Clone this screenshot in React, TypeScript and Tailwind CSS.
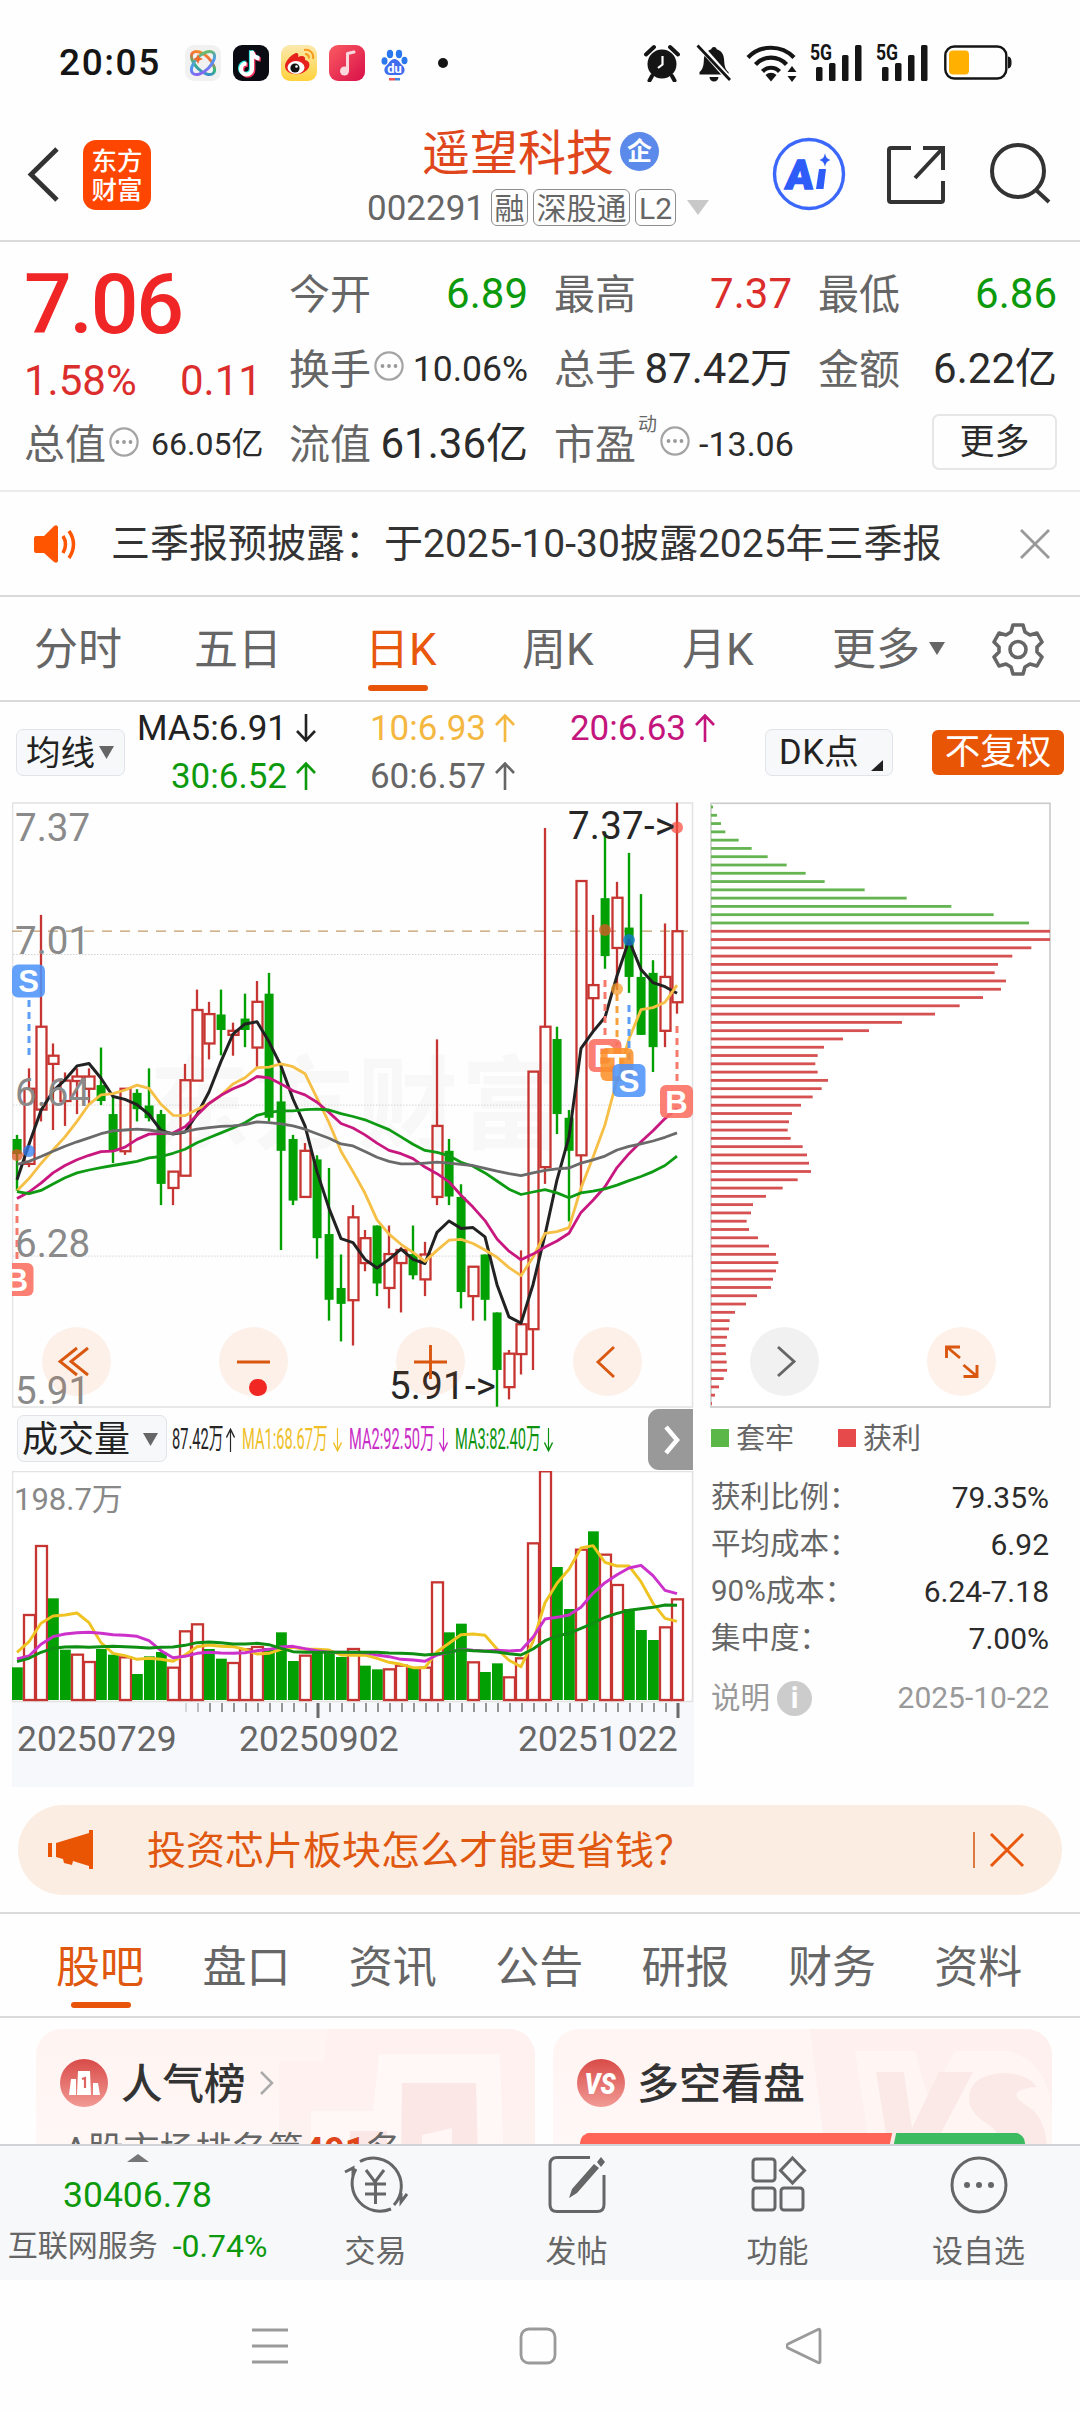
import React from "react";

/* ---------- candlestick data: direction, high, body top, body bottom, low ---------- */
type Candle = [string, number, number, number, number];
const CANDLES: Candle[] = [
  ["g", 845, 855, 892, 982], ["r", 682, 732, 916, 924], ["r", 306, 580, 783, 812], ["r", 621, 651, 671, 833],
  ["r", 692, 712, 762, 823], ["r", 682, 702, 713, 794], ["r", 682, 702, 732, 772], ["g", 631, 723, 762, 772],
  ["g", 750, 794, 885, 914], ["r", 730, 732, 885, 894], ["g", 733, 742, 782, 812], ["g", 682, 773, 804, 812],
  ["g", 784, 794, 965, 1017], ["r", 935, 935, 975, 1017], ["r", 671, 711, 945, 945], ["r", 489, 539, 712, 712],
  ["r", 519, 549, 621, 660], ["g", 489, 550, 588, 650], ["r", 570, 590, 600, 651], ["g", 499, 560, 588, 630],
  ["r", 468, 519, 631, 680], ["g", 448, 499, 803, 812], ["g", 671, 763, 884, 1127], ["g", 845, 855, 1006, 1017],
  ["r", 865, 884, 997, 997], ["g", 895, 905, 1098, 1148], ["g", 926, 1088, 1249, 1300], ["g", 1138, 1220, 1259, 1351],
  ["r", 1017, 1047, 1250, 1361], ["r", 1078, 1098, 1159, 1179], ["g", 1067, 1067, 1209, 1240], ["r", 1067, 1137, 1220, 1270],
  ["r", 1120, 1127, 1159, 1280], ["g", 1067, 1137, 1189, 1199], ["r", 1107, 1138, 1199, 1240], ["r", 611, 823, 997, 1017],
  ["g", 855, 884, 996, 1017], ["g", 966, 997, 1230, 1270], ["r", 1168, 1168, 1240, 1300], ["g", 1138, 1138, 1249, 1300],
  ["g", 1280, 1280, 1421, 1511], ["r", 1372, 1381, 1463, 1493], ["r", 1128, 1309, 1382, 1432], ["r", 690, 690, 1321, 1421],
  ["r", 93, 580, 924, 965], ["g", 580, 610, 794, 843], ["g", 784, 803, 884, 1057], ["r", 223, 223, 895, 985],
  ["r", 306, 478, 510, 590], ["g", 103, 265, 407, 438], ["r", 225, 264, 387, 490], ["g", 154, 337, 458, 497],
  ["g", 255, 458, 600, 600], ["g", 417, 448, 630, 691], ["r", 327, 458, 590, 630], ["r", 31, 346, 520, 548],
];
const MA5 = [955, 868, 785, 738, 710, 676, 670, 706, 751, 758, 771, 795, 834, 843, 838, 795, 740, 665, 598, 573, 568, 617, 676, 757, 823, 935, 1025, 1099, 1109, 1150, 1171, 1150, 1125, 1150, 1160, 1084, 1056, 1074, 1072, 1095, 1212, 1291, 1306, 1212, 1090, 955, 850, 633, 592, 557, 455, 368, 440, 472, 482, 498];
const MA10 = [982, 952, 915, 882, 850, 812, 770, 747, 744, 735, 723, 731, 770, 797, 798, 783, 768, 748, 720, 705, 680, 679, 671, 678, 695, 755, 815, 885, 935, 988, 1053, 1088, 1113, 1133, 1155, 1128, 1103, 1101, 1111, 1127, 1145, 1170, 1190, 1145, 1086, 1082, 1072, 975, 900, 820, 710, 610, 538, 533, 520, 478];
const MA20 = [1001, 985, 963, 938, 920, 906, 895, 886, 885, 875, 856, 843, 842, 840, 825, 797, 768, 748, 732, 720, 702, 705, 720, 737, 747, 765, 790, 817, 828, 845, 865, 883, 891, 903, 924, 940, 960, 993, 1022, 1055, 1100, 1130, 1151, 1137, 1120, 1105, 1086, 1035, 1005, 972, 925, 891, 862, 835, 805, 780];
const MA30 = [984, 989, 981, 965, 950, 938, 931, 925, 920, 915, 910, 901, 898, 890, 880, 864, 852, 840, 828, 815, 797, 790, 786, 786, 783, 782, 784, 793, 800, 808, 820, 832, 850, 868, 883, 888, 896, 912, 922, 938, 958, 978, 991, 985, 979, 987, 999, 987, 983, 977, 968, 957, 947, 935, 920, 897];
const MA60 = [917, 910, 898, 885, 873, 862, 852, 842, 835, 833, 831, 833, 838, 842, 837, 831, 827, 824, 823, 820, 813, 815, 818, 823, 831, 842, 853, 867, 872, 886, 900, 910, 916, 916, 914, 912, 914, 917, 920, 927, 934, 940, 945, 938, 932, 928, 926, 914, 906, 897, 882, 873, 867, 860, 851, 840];

/* ---------- volume data ---------- */
const VOLUMES: [string, number][] = [
  ["g", 803], ["r", 645], ["r", 438], ["g", 596], ["g", 750], ["r", 764], ["r", 786], ["g", 748], ["g", 765], ["r", 772],
  ["g", 823], ["g", 770], ["g", 757], ["r", 803], ["r", 694], ["r", 673], ["g", 748], ["g", 777], ["r", 789], ["r", 748],
  ["r", 741], ["g", 745], ["g", 698], ["g", 784], ["r", 767], ["g", 750], ["g", 757], ["g", 772], ["r", 747], ["g", 798],
  ["g", 809], ["r", 808], ["r", 797], ["g", 802], ["r", 803], ["r", 547], ["g", 698], ["g", 672], ["r", 787], ["g", 817],
  ["g", 791], ["r", 832], ["r", 775], ["r", 430], ["r", 214], ["g", 502], ["g", 628], ["r", 449], ["g", 395], ["r", 464],
  ["r", 555], ["g", 628], ["g", 691], ["g", 721], ["r", 682], ["r", 598],
];
const VMA1 = [757, 725, 670, 648, 645, 639, 668, 728, 760, 767, 778, 775, 778, 784, 765, 740, 735, 739, 740, 748, 762, 760, 748, 742, 748, 748, 750, 765, 766, 765, 775, 787, 793, 803, 803, 755, 730, 704, 702, 706, 747, 781, 800, 725, 608, 550, 508, 444, 437, 487, 498, 498, 545, 610, 655, 664];
const VMA2 = [777, 768, 733, 710, 702, 698, 697, 700, 704, 706, 709, 722, 752, 773, 769, 760, 757, 759, 760, 758, 752, 748, 741, 739, 746, 752, 757, 757, 757, 758, 765, 770, 778, 780, 784, 765, 757, 748, 751, 753, 751, 753, 751, 712, 657, 652, 645, 622, 580, 548, 524, 504, 496, 527, 571, 581];
const VMA3 = [785, 775, 757, 745, 741, 740, 742, 740, 739, 740, 742, 744, 742, 741, 736, 728, 726, 728, 732, 732, 730, 734, 745, 755, 757, 757, 757, 757, 757, 757, 757, 759, 760, 761, 765, 762, 757, 749, 752, 754, 756, 761, 765, 747, 722, 708, 700, 685, 670, 652, 640, 631, 626, 622, 615, 616];

/* ---------- chip distribution: bar lengths ---------- */
const CHIPS = [6, 18, 30, 43, 83, 122, 170, 227, 284, 341, 461, 587, 721, 848, 954, 1017, 1017, 961, 904, 861, 851, 885, 870, 816, 746, 672, 573, 474, 396, 339, 320, 313, 320, 351, 332, 305, 270, 243, 234, 230, 239, 275, 288, 294, 300, 260, 215, 165, 126, 120, 107, 114, 141, 174, 195, 202, 195, 186, 180, 138, 105, 72, 56, 54, 48, 44, 45, 47, 48, 38, 24, 12, 3];

const cx = (i: number) => 17 + i * 12;
const py = (v: number) => 790 + v / 2.45;
const vy = (v: number) => 1400 + v / 3;
const line = (a: number[], f: (v: number) => number) => a.map((v, i) => `${cx(i)},${f(v).toFixed(1)}`).join(" ");

function Marker({ x, y, c, t }: { x: number; y: number; c: string; t: string }) {
  return (
    <g>
      <rect x={x - 16.5} y={y - 16} width="33" height="33" rx="6" fill={c} fillOpacity="0.88" />
      <text x={x} y={y + 11.5} textAnchor="middle" fontSize="31" fontWeight="700" fill="#fff" fontFamily="Liberation Sans">{t}</text>
    </g>
  );
}

function CandleChart() {
  return (
    <svg width="682" height="606" viewBox="12 802 682 606" className="block shrink-0">
      <text x="149" y="1141" fontSize="101" fontWeight="700" letterSpacing="3" fill="#f8f8f9">东方财富</text>
      <rect x="12.5" y="803" width="680" height="604" fill="none" stroke="#e3e3e3" strokeWidth="1.6" />
      {[403, 772, 1142].map((v) => (
        <line key={v} x1="13" x2="692" y1={py(v)} y2={py(v)} stroke="#d4d4d4" strokeWidth="1" strokeDasharray="1.5 1.5" />
      ))}
      <line x1="12" x2="688" y1="931.2" y2="931.2" stroke="#c09a68" strokeWidth="1.3" strokeDasharray="10 8" />
      {CANDLES.map(([d, h, t, b, l], i) =>
        d === "g" ? (
          <g key={i} fill="#02a002">
            <rect x={cx(i) - 1.2} y={py(h)} width="2.4" height={py(l) - py(h)} />
            <rect x={cx(i) - 4.4} y={py(t)} width="9" height={py(b) - py(t)} />
          </g>
        ) : (
          <g key={i} stroke="#c63531" strokeWidth="2.3" fill="none">
            <line x1={cx(i)} x2={cx(i)} y1={py(h)} y2={py(t)} />
            <line x1={cx(i)} x2={cx(i)} y1={py(b)} y2={py(l)} />
            <rect x={cx(i) - 4.5} y={py(t)} width="10" height={py(b) - py(t)} />
          </g>
        )
      )}
      <g fill="none" strokeWidth="2.8" strokeLinejoin="round">
        <polyline points={line(MA5, py)} stroke="#222" strokeWidth="3" />
        <polyline points={line(MA10, py)} stroke="#f6bf45" />
        <polyline points={line(MA20, py)} stroke="#c8187f" />
        <polyline points={line(MA30, py)} stroke="#0f9a14" />
        <polyline points={line(MA60, py)} stroke="#6a6a6a" />
      </g>
      <g strokeWidth="3" strokeDasharray="7 5" fill="none">
        <line x1="29" x2="29" y1="1000" y2="1056" stroke="#5c9df5" />
        <line x1="17" x2="17" y1="1204" y2="1260" stroke="#f67a6c" />
        <line x1="605" x2="605" y1="980" y2="1038" stroke="#f67a6c" />
        <line x1="617" x2="617" y1="994" y2="1046" stroke="#f6a13e" />
        <line x1="629" x2="629" y1="1005" y2="1062" stroke="#5c9df5" />
        <line x1="677" x2="677" y1="1026" y2="1082" stroke="#f67a6c" />
      </g>
      <g fillOpacity="0.75">
        <circle cx="17" cy="1155" r="6" fill="#e2582a" />
        <circle cx="29" cy="1151" r="6" fill="#2d7ff0" />
        <circle cx="605" cy="930" r="6" fill="#e2582a" />
        <circle cx="617" cy="989" r="6" fill="#f39a2d" />
        <circle cx="629" cy="940" r="6" fill="#1677d8" />
        <circle cx="677" cy="827.5" r="6" fill="#fa4f42" />
      </g>
      <Marker x={28.5} y={980.5} c="#4d94fb" t="S" />
      <Marker x={17} y={1279} c="#fb6d5f" t="B" />
      <Marker x={605} y={1055} c="#fb6d5f" t="B" />
      <Marker x={617} y={1064} c="#fb912a" t="T" />
      <Marker x={629} y={1080} c="#4d94fb" t="S" />
      <Marker x={676.5} y={1101} c="#fb6d5f" t="B" />
      <g fontSize="38.5" fill="#8a8a8a">
        <text x="15" y="841">7.37</text>
        <text x="15" y="954">7.01</text>
        <text x="15" y="1106">6.64</text>
        <text x="15" y="1257">6.28</text>
        <text x="15" y="1404">5.91</text>
      </g>
      <g fontSize="38.5" fill="#262626">
        <text x="568" y="839" textLength="107">7.37-&gt;</text>
        <text x="389" y="1399" textLength="107">5.91-&gt;</text>
      </g>
    </svg>
  );
}

function VolumeChart() {
  return (
    <svg width="682" height="248" viewBox="12 1471 682 248" className="block shrink-0">
      <rect x="12.5" y="1471.5" width="680" height="230" fill="#fff" stroke="#e3e3e3" strokeWidth="1.6" />
      {VOLUMES.map(([d, t], i) =>
        d === "g" ? (
          <rect key={i} x={cx(i) - 5} y={vy(t - 1)} width="10.8" height={1700 - vy(t - 1)} fill="#02a002" />
        ) : (
          <rect key={i} x={cx(i) - 5} y={vy(t)} width="11" height={1700 - vy(t)} fill="#fff" stroke="#c63531" strokeWidth="2.3" />
        )
      )}
      <g fill="none" strokeWidth="2.9" strokeLinejoin="round">
        <polyline points={line(VMA1, vy)} stroke="#efc322" />
        <polyline points={line(VMA2, vy)} stroke="#cc31cb" />
        <polyline points={line(VMA3, vy)} stroke="#0e8e12" />
      </g>
      {Array.from({ length: 42 }, (_, k) => k + 14).map((i) => {
        const big = i === 25 || i === 55;
        return (
          <line key={i} x1={cx(i) + 1} x2={cx(i) + 1} y1="1703" y2={big ? 1718 : 1712} stroke={big ? "#6b6b6b" : "#8b8b8b"} strokeOpacity={i === 14 ? 0.35 : i === 15 ? 0.6 : 1} strokeWidth={big ? 3 : 1.8} />
        );
      })}
      <text x="14" y="1510" fontSize="31" fill="#888">198.7万</text>
    </svg>
  );
}

function ChipChart() {
  return (
    <svg width="341" height="606" viewBox="710 802 341 606" className="block shrink-0">
      <rect x="711" y="803.3" width="339" height="603.7" fill="#fff" stroke="#cacaca" strokeWidth="1.6" />
      {CHIPS.map((w, i) => (
        <rect key={i} x="711" y={805.6 + i * 8.284} width={w / 3} height="2.8" fill={i < 15 ? "#65b452" : "#d65151"} />
      ))}
    </svg>
  );
}

const Dots = () => (
  <svg width="30" height="30" viewBox="0 0 30 30" className="shrink-0">
    <circle cx="15" cy="15" r="13.6" fill="none" stroke="#a4a4a4" strokeWidth="2.2" />
    {[8.5, 15, 21.5].map((x) => <circle key={x} cx={x} cy="15" r="1.9" fill="#999" />)}
  </svg>
);

const Arrow = ({ up, w = 20, h = 28 }: { up?: boolean; w?: number; h?: number }) => (
  <svg width={w} height={h} viewBox="0 0 20 28" preserveAspectRatio="none" className="shrink-0" fill="none" stroke="currentColor" strokeWidth="2.6">
    {up ? <path d="M10 28V1.5M1 11l9-9.5 9 9.5" /> : <path d="M10 0v26.500M1 17l9 9.500 9-9.500" />}
  </svg>
);

const Tri = ({ className }: { className: string }) => (
  <svg viewBox="0 0 16 14" preserveAspectRatio="none" className={className}><path d="M0 0h16L8 14z" fill="currentColor" /></svg>
);

function Signal() {
  return (
    <div className="relative h-[37px] w-[52px] shrink-0">
      <span className="absolute left-0 top-[-2px] origin-left scale-x-[0.8] text-[22px] font-bold leading-none">5G</span>
      <svg width="52" height="37" viewBox="0 0 52 37" fill="#151515">
        <rect x="6" y="23" width="6.500" height="14" rx="1.500" /><rect x="19" y="19" width="6.500" height="18" rx="1.500" />
        <rect x="32" y="11" width="6.500" height="26" rx="1.500" /><rect x="45" y="1" width="6.500" height="36" rx="1.500" />
      </svg>
    </div>
  );
}

function StatusBar() {
  return (
    <div className="flex h-[110px] shrink-0 items-center pl-[59px] pt-[15px] text-[#151515]">
      <span className="w-[126px] whitespace-nowrap text-[37px] font-medium leading-none tracking-[1.600px]">20:05</span>
      <div className="flex w-[268px] items-center gap-3">
        <svg width="36" height="36" viewBox="0 0 36 36">
          <defs>
            <linearGradient id="orb" x1="0" y1="0" x2="1" y2="1"><stop offset="0" stopColor="#f79a1c" /><stop offset="0.3" stopColor="#f2703a" /><stop offset="0.6" stopColor="#35b878" /><stop offset="1" stopColor="#3a7bf0" /></linearGradient>
            <linearGradient id="orb2" x1="1" y1="0" x2="0" y2="1"><stop offset="0" stopColor="#74c63b" /><stop offset="0.5" stopColor="#4a9af0" /><stop offset="1" stopColor="#9b53f2" /></linearGradient>
          </defs>
          <rect width="36" height="36" rx="9" fill="#f1f1f2" />
          <ellipse cx="18" cy="18" rx="14.500" ry="7.500" transform="rotate(45 18 18)" fill="none" stroke="url(#orb)" strokeWidth="3" />
          <ellipse cx="18" cy="18" rx="14.500" ry="7.500" transform="rotate(-45 18 18)" fill="none" stroke="url(#orb2)" strokeWidth="3" />
          <path d="M13 9l1.500 3.500L18 14l-3.500 1.500L13 19l-1.500-3.500L8 14l3.500-1.500z" fill="#f26a2a" />
        </svg>
        <svg width="36" height="36" viewBox="0 0 36 36">
          <rect width="36" height="36" rx="9" fill="#0b0b14" />
          <g fill="none" strokeWidth="4.200">
            <path d="M19 6v18a5.500 5.500 0 1 1-5.500-5.500M19 6c.5 4 3.500 7 7.500 7.500" stroke="#2ee6e0" transform="translate(-1 -.8)" />
            <path d="M19 6v18a5.500 5.500 0 1 1-5.500-5.500M19 6c.5 4 3.500 7 7.500 7.500" stroke="#f0315a" transform="translate(1.300 1.200)" />
            <path d="M19 6v18a5.500 5.500 0 1 1-5.500-5.500M19 6c.5 4 3.500 7 7.500 7.500" stroke="#fff" />
          </g>
        </svg>
        <svg width="36" height="36" viewBox="0 0 36 36">
          <defs><linearGradient id="wb" x1="0" y1="0" x2="0" y2="1"><stop offset="0" stopColor="#fbe9ae" /><stop offset="1" stopColor="#ffd23c" /></linearGradient></defs>
          <rect width="36" height="36" rx="9" fill="url(#wb)" />
          <path d="M4 21c0-5 7-12 11-13 2-.3 3 1.500 2 4 4-2 8-1 7 3 5 1 6 6 2 10-7 7-22 5-22-4z" fill="#e6201c" />
          <ellipse cx="15" cy="22.500" rx="8.500" ry="6.500" fill="#fff" /><circle cx="14" cy="23" r="4.600" fill="#111" /><circle cx="15.500" cy="21.500" r="1.300" fill="#fff" />
          <path d="M23 5c6-1 10 3 9 9M24 9c3 0 4 1.500 4 4.500" fill="none" stroke="#f79a1c" strokeWidth="2" />
        </svg>
        <svg width="36" height="36" viewBox="0 0 36 36">
          <defs><linearGradient id="ms" x1="0" y1="0" x2="1" y2="1"><stop offset="0" stopColor="#fb5b61" /><stop offset="1" stopColor="#d80f49" /></linearGradient></defs>
          <rect width="36" height="36" rx="9" fill="url(#ms)" />
          <path d="M18.500 25V8.500l6.500-1.500" fill="none" stroke="#fbd8dc" strokeWidth="3" strokeLinejoin="round" strokeLinecap="round" />
          <circle cx="15.500" cy="26" r="4.500" fill="#fbd8dc" />
        </svg>
        <svg width="36" height="36" viewBox="0 0 36 36" fill="#2b78ee">
          <ellipse cx="13" cy="9" rx="3.200" ry="4.200" /><ellipse cx="22" cy="9" rx="3.200" ry="4.200" /><ellipse cx="7.500" cy="16" rx="3" ry="3.800" /><ellipse cx="27.500" cy="15.500" rx="3" ry="3.800" />
          <path d="M17.500 14c4 0 5 4 8 6.500 4 3.500 2 9.500-3 9.500H12.500c-5 0-7-6-3-9.500 3-2.500 4-6.500 8-6.500z" fill="#3f6df0" />
          <text x="17.500" y="28" fontSize="13" fontWeight="700" fill="#fff" textAnchor="middle">du</text>
          <rect x="12" y="33" width="6" height="2.500" fill="#e55" /><rect x="18" y="33" width="5" height="2.500" fill="#48d" />
        </svg>
        <span className="ml-[13px] h-[10px] w-[10px] shrink-0 rounded-full bg-[#151515]" />
      </div>
      <svg width="36" height="38" viewBox="0 0 36 38" className="ml-[191px] shrink-0">
        <circle cx="18" cy="20" r="14.500" fill="#151515" />
        <path d="M2 10.500L10 3M34 10.500L26 3M8 32l-2.500 4.500M28 32l2.500 4.500" stroke="#151515" strokeWidth="4" strokeLinecap="round" />
        <path d="M18.500 12v8.500L14 24" stroke="#fff" strokeWidth="2.200" fill="none" />
      </svg>
      <svg width="36" height="38" viewBox="0 0 36 38" className="ml-[16px] shrink-0">
        <path d="M18 3c1.800 0 2.500 1 2.700 2.300C26 7 28 11 28.200 17c.2 6 1.800 9 4.300 11v2.500h-29V28c2.500-2 4.100-5 4.300-11C8 11 10 7 15.300 5.300 15.500 4 16.200 3 18 3zM13.500 33h9a4.500 4.500 0 0 1-9 0z" fill="#151515" />
        <path d="M3.500 1.500L34 36" stroke="#fff" strokeWidth="6" /><path d="M1.500 1.500L34 36" stroke="#151515" strokeWidth="2.800" />
      </svg>
      <svg width="52" height="38" viewBox="0 0 52 38" className="ml-[14px] shrink-0" fill="none" stroke="#151515" strokeWidth="4.200">
        <path d="M2 13.500a32 32 0 0 1 46 0M9.500 20.500a21 21 0 0 1 31 0M16.500 27.500a11.500 11.500 0 0 1 17 0" />
        <path d="M19.500 31a8 8 0 0 1 11 0L25 37.500z" fill="#151515" stroke="none" /><path d="M46 22l4.500 6h-9zM46 38l4.500-6h-9z" fill="#151515" stroke="none" />
      </svg>
      <div className="ml-[12px] flex gap-[14px]"><Signal /><Signal /></div>
      <svg width="68" height="36" viewBox="0 0 68 36" className="ml-[16px] shrink-0">
        <rect x="1.300" y="1.500" width="61" height="32" rx="9" fill="none" stroke="#151515" strokeWidth="2.400" />
        <rect x="5" y="5.500" width="20" height="24" rx="4" fill="#ffb000" /><path d="M64 11.500c3 .5 3.500 3 3.500 6s-.5 5.500-3.500 6z" fill="#151515" />
      </svg>
    </div>
  );
}

const Tag = ({ children, w }: { children: React.ReactNode; w: string }) => (
  <span className={`${w} flex h-[37px] shrink-0 items-center justify-center whitespace-nowrap rounded-[6px] border-[1.500px] border-[#8f8f8f] pt-[2px] text-[30px] leading-none`}>{children}</span>
);

function Header() {
  return (
    <div className="flex h-[132px] shrink-0 border-b-2 border-[#dadada] pl-[26px]">
      <svg width="36" height="60" viewBox="0 0 36 60" className="mt-[34px]" fill="none" stroke="#333" strokeWidth="4.800"><path d="M31 5L5 30.500 31 56" /></svg>
      <div className="ml-[21px] mt-[30px] flex h-[70px] w-[68px] flex-col items-center justify-center rounded-[13px] bg-[#ff4600] pt-px text-[25.500px] font-medium leading-[28.500px] text-white">
        <span>东方</span><span>财富</span>
      </div>
      <div className="ml-[216px] flex w-[344px] flex-col">
        <div className="mt-[15px] flex h-[52px] items-center pl-[55px]">
          <span className="whitespace-nowrap pt-[5px] text-[48px] leading-none text-[#e0461c]">遥望科技</span>
          <span className="ml-[6px] flex h-[39px] w-[39px] items-center justify-center rounded-full bg-[#5b8aea] pt-px text-[25px] font-bold leading-none text-white">企</span>
        </div>
        <div className="mt-[12px] flex h-[37px] items-center text-[#666]">
          <span className="w-[124px] pt-px text-[35px] leading-none">002291</span>
          <Tag w="w-[37px]">融</Tag><span className="w-[5px]" /><Tag w="w-[97px]">深股通</Tag><span className="w-[5px]" /><Tag w="w-[41px]">L2</Tag>
          <Tri className="ml-[11px] h-[15px] w-[22px] text-[#c8c8c8]" />
        </div>
      </div>
      <svg width="74" height="74" viewBox="0 0 74 74" className="ml-[61px] mt-[27px] shrink-0">
        <circle cx="37" cy="37" r="34.500" fill="none" stroke="#3b68fb" strokeWidth="3.400" />
        <text x="13" y="52" fontSize="41" fontWeight="900" fill="#2d5cf8" stroke="#2d5cf8" strokeWidth="1.400" transform="skewX(-5) translate(4 0)">A</text>
        <path d="M47 32h7l-2.500 20h-7.500z" fill="#2d5cf8" />
        <path d="M53 16c.8 4.500 2.200 6 5.500 7-3.300 1-4.700 2.700-5.500 7-.8-4.300-2.200-6-5.500-7 3.300-1 4.700-2.500 5.500-7z" fill="#2d5cf8" />
      </svg>
      <svg width="60" height="60" viewBox="0 0 60 60" className="ml-[40px] mt-[34px] shrink-0" fill="none" stroke="#333" strokeWidth="4">
        <path d="M25 4H5q-2 0-2 2v50q0 2 2 2h50q2 0 2-2V37M37 4h20v22M57 4L29 34" />
      </svg>
      <svg width="64" height="64" viewBox="0 0 64 64" className="ml-[42px] mt-[32px] shrink-0" fill="none" stroke="#333" strokeWidth="4">
        <circle cx="30" cy="29" r="26" /><path d="M48 48l13 12" />
      </svg>
    </div>
  );
}

const Label = ({ children }: { children: React.ReactNode }) => <span className="whitespace-nowrap pt-[3px] text-[41px] leading-none text-[#666]">{children}</span>;

function Quote() {
  return (
    <div className="flex h-[250px] shrink-0 border-b-2 border-[#ececec] pl-[24px] pr-[23px] text-[#2b2b2b]">
      <div className="flex w-[265px] flex-col pt-[21px]">
        <span className="text-[84px] font-medium leading-[84px] tracking-[-2.200px] text-[#f02525]">7.06</span>
        <div className="mt-[11px] flex h-[46px] items-center text-[42px] leading-none text-[#dc2d2d]"><span className="w-[156px]">1.58%</span><span>0.11</span></div>
        <div className="mt-[17px] flex h-[46px] items-center"><Label>总值</Label><span className="mb-[5px] ml-[3px]"><Dots /></span><span className="ml-[12px] whitespace-nowrap text-[32px] leading-none">66.05亿</span></div>
      </div>
      <div className="grid flex-1 grid-cols-[239px_238px_239px] gap-x-[26px] pt-[14px] [grid-auto-rows:75px]">
        <div className="flex items-center justify-between"><Label>今开</Label><span className="text-[42px] leading-none text-[#0c9a0c]">6.89</span></div>
        <div className="flex items-center justify-between"><Label>最高</Label><span className="text-[42px] leading-none text-[#dc2d2d]">7.37</span></div>
        <div className="flex items-center justify-between"><Label>最低</Label><span className="text-[42px] leading-none text-[#0c9a0c]">6.86</span></div>
        <div className="flex items-center justify-between"><span className="flex items-center"><Label>换手</Label><span className="mb-[6px] ml-[3px]"><Dots /></span></span><span className="pt-[2px] text-[35.500px] leading-none">10.06%</span></div>
        <div className="flex items-center justify-between"><Label>总手</Label><span className="whitespace-nowrap pt-px text-[42px] leading-none">87.42万</span></div>
        <div className="flex items-center justify-between"><Label>金额</Label><span className="whitespace-nowrap pt-px text-[42px] leading-none">6.22亿</span></div>
        <div className="flex items-center justify-between"><Label>流值</Label><span className="whitespace-nowrap pt-px text-[42px] leading-none">61.36亿</span></div>
        <div className="flex items-center"><Label>市盈</Label><span className="mb-[38px] ml-[2px] text-[19px] leading-none text-[#666]">动</span><span className="mb-[6px] ml-[3px]"><Dots /></span><span className="ml-[9px] text-[34px] leading-none">-13.06</span></div>
        <div className="flex items-center justify-end pb-[4px]"><span className="flex h-[56px] w-[125px] items-center justify-center rounded-[7px] border-2 border-[#e6e6e6] pt-[2px] text-[35px] leading-none">更多</span></div>
      </div>
    </div>
  );
}

function Notice() {
  return (
    <div className="flex h-[105px] shrink-0 items-center border-b-2 border-[#dadada] pl-[33px] text-[#333]">
      <svg width="46" height="40" viewBox="0 0 46 40" fill="none" stroke="#ff5500" strokeWidth="3.500">
        <path d="M3 12h8L21 2q3-2 4 1v34q-1 3-4 1L11 29H3q-2 0-2-3V15q0-3 2-3z" fill="#ff5500" stroke="none" /><path d="M30 12q5 8 0 17M36 7q9 13 0 27" />
      </svg>
      <span className="ml-[32px] w-[907px] whitespace-nowrap pt-[2px] text-[39px] leading-none">三季报预披露：于2025-10-30披露2025年三季报</span>
      <svg width="34" height="34" viewBox="0 0 34 34" stroke="#999" strokeWidth="2.800"><path d="M3 3l28 28M31 3L3 31" /></svg>
    </div>
  );
}

function PeriodTabs() {
  return (
    <div className="flex h-[105px] shrink-0 items-center border-b-2 border-[#dadada] pl-[34px] text-[44px] leading-none text-[#666]">
      <span className="w-[160px] pt-[3px]">分时</span><span className="w-[171px] pt-[3px]">五日</span>
      <span className="relative w-[157px] pt-[3px] text-[#e8570c]">日K<span className="absolute -bottom-[19px] left-[3px] h-[6px] w-[60px] rounded-full bg-[#e8540a]" /></span>
      <span className="w-[160px] pt-[3px]">周K</span><span className="w-[150px] pt-[3px]">月K</span><span className="w-[97px] whitespace-nowrap pt-[3px]">更多</span>
      <Tri className="h-[13px] w-[16px]" />
      <svg width="54" height="54" viewBox="0 0 54 54" className="ml-[46px]" fill="none" stroke="#666" strokeWidth="3.600" strokeLinejoin="round">
        <path d="M22 3h10l2 7 5 3 7-2 5 9-5 5v5l5 5-5 9-7-2-5 3-2 7H22l-2-7-5-3-7 2-5-9 5-5v-5l-5-5 5-9 7 2 5-3z" /><circle cx="27" cy="27.500" r="8" />
      </svg>
    </div>
  );
}

const Ind = ({ c, t, up }: { c: string; t: string; up?: boolean }) => (
  <span className={`${c} flex items-center justify-end gap-[9px] text-[35px] leading-none`}><span className="pt-[2px]">{t}</span><Arrow up={up} /></span>
);

function IndicatorBar() {
  return (
    <div className="flex h-[100px] shrink-0 items-center pl-[16px]">
      <span className="flex h-[47px] w-[109px] shrink-0 items-center rounded-[7px] border-[1.500px] border-[#e0e3e8] bg-[#f7f8fa] pl-[9px] text-[34.500px] leading-none text-[#222]"><span className="whitespace-nowrap pt-[2px]">均线</span><Tri className="ml-[4px] h-[13px] w-[15px] text-[#666]" /></span>
      <div className="grid w-[592px] shrink-0 grid-cols-[191px_199px_200px] pb-px [grid-auto-rows:48px]">
        <Ind c="text-[#222]" t="MA5:6.91" /><Ind c="text-[#f4b73f]" t="10:6.93" up /><Ind c="text-[#c4157c]" t="20:6.63" up />
        <Ind c="text-[#0c9a0c]" t="30:6.52" up /><Ind c="text-[#666]" t="60:6.57" up />
      </div>
      <span className="ml-[48px] flex h-[47px] w-[128px] shrink-0 items-center whitespace-nowrap rounded-[7px] border-[1.500px] border-[#e0e3e8] bg-[#f7f8fa] pl-[13px] text-[34.500px] leading-none tracking-[0.500px] text-[#222]"><span className="pt-px">DK点</span>
        <svg width="12" height="11" viewBox="0 0 12 11" className="ml-[12px] mt-[26px]"><path d="M12 0v11H0z" fill="#222" /></svg></span>
      <span className="ml-[39px] flex h-[45px] w-[132px] shrink-0 items-center justify-center whitespace-nowrap rounded-[6px] bg-[#e85505] pt-[2px] text-[35.500px] leading-none text-white">不复权</span>
    </div>
  );
}

const ROWS = [["获利比例：", "79.35%"], ["平均成本：", "6.92"], ["90%成本：", "6.24-7.18"], ["集中度：", "7.00%"]];

const VolText = ({ t, w, c, up }: { t: string; w: string; c: string; up?: boolean }) => (
  <span className={`${c} flex shrink-0 items-center`}>
    <span className={`${w} whitespace-nowrap text-[29px] leading-none`}><span className="inline-block origin-left scale-x-[0.505]">{t}</span></span>
    <Arrow up={up} w={9} h={24} />
  </span>
);

function Charts() {
  return (
    <div className="relative flex h-[1003px] shrink-0 pl-[12px]">
      <div className="flex w-[682px] flex-col">
        <CandleChart />
        <div className="flex h-[63px] shrink-0 items-center pl-[5px]">
          <span className="mb-[2px] flex h-[47px] w-[150px] shrink-0 items-center rounded-[7px] border-[1.500px] border-[#e0e3e8] bg-[#f7f8fa] pl-[4px] pt-[2px] text-[36px] leading-none text-[#222]"><span className="whitespace-nowrap">成交量</span><Tri className="ml-[13px] h-[13px] w-[15px] text-[#666]" /></span>
          <div className="ml-[5px] flex w-[476px] items-center gap-[7px]">
            <VolText t="87.42万" w="w-[54px]" c="text-[#262626]" up />
            <VolText t="MA1:68.67万" w="w-[91px]" c="text-[#efbf28]" />
            <VolText t="MA2:92.50万" w="w-[90px]" c="text-[#c92cc6]" />
            <VolText t="MA3:82.40万" w="w-[89px]" c="text-[#0c920f]" />
          </div>
          <span className="flex h-[61px] w-[45px] shrink-0 items-center justify-center rounded-l-[11px] bg-[#999] pl-[3px]">
            <svg width="18" height="30" viewBox="0 0 18 30" fill="none" stroke="#fff" strokeWidth="4.500"><path d="M3 2l11 13L3 28" /></svg>
          </span>
        </div>
        <div className="h-[316px] bg-[#f7f8fb]">
          <VolumeChart />
          <div className="flex pl-[5px] text-[35.500px] leading-[40px] text-[#666]"><span className="w-[222px]">20250729</span><span className="w-[279px]">20250902</span><span>20251022</span></div>
        </div>
      </div>
      <div className="ml-[16px] flex w-[341px] flex-col">
        <ChipChart />
        <div className="flex h-[60px] items-center pl-px text-[29px] leading-none text-[#666]">
          <span className="h-[18px] w-[18px] bg-[#5bb848]" /><span className="ml-[7px] w-[102px] pt-[3px]">套牢</span><span className="h-[18px] w-[18px] bg-[#e64a4a]" /><span className="ml-[7px] pt-[3px]">获利</span>
        </div>
        <div className="mt-[6px] flex flex-col">
          {ROWS.map(([a, b]) => (
            <div key={a} className="flex h-[47px] items-center justify-between pl-[1px] pr-[2px] text-[29.500px] leading-none"><span className="whitespace-nowrap pt-px text-[#666]">{a}</span><span className="text-[30px] text-[#2b2b2b]">{b}</span></div>
          ))}
        </div>
        <div className="mt-[12px] flex h-[48px] items-center pl-[1px] pr-[2px] text-[29.500px] leading-none text-[#999]">
          <span className="whitespace-nowrap pt-[2px]">说明</span>
          <span className="ml-[7px] flex h-[35px] w-[35px] items-center justify-center rounded-full bg-[#ccc] text-[29px] font-bold leading-none text-white">i</span>
          <span className="ml-auto text-[30px]">2025-10-22</span>
        </div>
      </div>
      <div className="absolute left-[42px] top-[525px] flex gap-[108px]">
        {[
          <path key="a" d="M46 21L29 34.500 46 48M35 21L18 34.500 35 48" />,
          <path key="b" d="M18 35h33" />,
          <path key="c" d="M18 35h33M34.500 18v34" />,
          <path key="d" d="M41 20L25 35l16 15" />,
          <path key="e" d="M28 20l16 14.500L28 49" stroke="#666" />,
          <path key="f" d="M19.500 31V20H33M20 20l13 11M50 38v11.500H36.500M49.500 49l-13-11" />,
        ].map((p, i) => (
          <svg key={i} width="69" height="69" viewBox="0 0 69 69" fill="none" stroke="#d9570f" strokeWidth="2.900">
            <circle cx="34.500" cy="34.500" r="34.500" fill={i === 4 ? "#000" : "#f8661c"} fillOpacity={i === 4 ? 0.055 : 0.095} stroke="none" />{p}
          </svg>
        ))}
      </div>
      <span className="absolute left-[249px] top-[577px] h-[17px] w-[18px] rounded-full bg-[#f02722]" />
    </div>
  );
}

function Banner() {
  return (
    <div className="mx-[18px] flex h-[90px] shrink-0 items-center rounded-full bg-[#fcede3] pl-[29px] text-[#e0570f]">
      <svg width="47" height="40" viewBox="0 0 47 40" fill="#ea5504"><path d="M1 13h4v14H1zM9 13L42 3V0h4v39h-4v-3l-16-5-1 4-8-2-1-4-7-2z" /></svg>
      <span className="ml-[53px] w-[826px] whitespace-nowrap pt-[2px] text-[39px] leading-none">投资芯片板块怎么才能更省钱？</span>
      <span className="h-[36px] w-[2px] bg-[#dd7a42]" />
      <svg width="36" height="36" viewBox="0 0 36 36" className="ml-[14px]" stroke="#e8570c" strokeWidth="3"><path d="M2 2l32 32M34 2L2 34" /></svg>
    </div>
  );
}

function SectionTabs() {
  return (
    <div className="mt-[17px] flex h-[106px] shrink-0 items-center gap-[58.400px] border-y-2 border-[#dadada] pl-[56px] text-[44px] leading-none text-[#666]">
      <span className="relative whitespace-nowrap pt-[5px] text-[#e0570f]">股吧<span className="absolute -bottom-[18px] left-[15px] h-[6px] w-[60px] rounded-full bg-[#e8540a]" /></span>
      {["盘口", "资讯", "公告", "研报", "财务", "资料"].map((t) => <span key={t} className="whitespace-nowrap pt-[5px]">{t}</span>)}
    </div>
  );
}

function Cards() {
  return (
    <div className="relative flex h-[126px] shrink-0 gap-[18px] overflow-hidden pl-[36px] pt-[11px]">
      <div className="relative h-[200px] w-[499px] shrink-0 overflow-hidden rounded-[26px] bg-gradient-to-b from-[#fff4f2] to-[#fffaf9]">
        <svg width="499" height="200" viewBox="0 0 499 200" className="absolute left-0 top-0">
          <path d="M291 0h208v200H243V32h45z" fill="#fdeeec" fillOpacity=".6" />
          <path d="M343 25h121l6 175H275V82h62z" fill="#fff8f6" />
          <path d="M366 54h74l4 146h-80z" fill="#fbe8e6" /><path d="M314 102h37v98h-40z" fill="#fbe8e6" /><path d="M386 106l30-7v100h-30z" fill="#fff6f5" />
        </svg>
        <div className="relative flex h-[108px] items-center pl-[24px]">
          <svg width="48" height="48" viewBox="0 0 48 48">
            <defs><linearGradient id="bd" x1="0" y1="0" x2="0" y2="1"><stop offset="0" stopColor="#d84b48" /><stop offset="1" stopColor="#f29a95" /></linearGradient></defs>
            <circle cx="24" cy="24" r="24" fill="url(#bd)" /><path d="M11 20h5v16H9zM18 12h12l1 24H17zM33 24h5l2 12h-7z" fill="#fff" />
            <path d="M22 20l3-1v10" stroke="#dd6460" strokeWidth="2.200" fill="none" />
          </svg>
          <span className="ml-[13px] whitespace-nowrap pt-[3px] text-[41.500px] font-medium leading-none text-[#333]">人气榜</span>
          <svg width="16" height="26" viewBox="0 0 16 26" className="ml-[13px]" fill="none" stroke="#aaa" strokeWidth="2.500"><path d="M2 2l11 11L2 24" /></svg>
        </div>
        <div className="relative -mt-[4px] whitespace-nowrap pl-[28px] text-[36px] leading-none text-[#666]">A股市场排名第<b className="text-[#e0461c]">491</b>名</div>
      </div>
      <div className="relative h-[200px] w-[499px] shrink-0 overflow-hidden rounded-[26px] bg-gradient-to-b from-[#fff5f3] to-[#fffaf9]">
        <svg width="499" height="200" viewBox="0 0 499 200" className="absolute left-0 top-0">
          <path d="M257 0h242v120H272z" fill="#fdf0ee" />
          <path d="M302 22h60l14 50 26-50h52q45 10 45 70v60H322z" fill="#fff6f4" />
          <path d="M323 43h28l8 56 27-56h34l-42 80h-42z" fill="#fbe9e7" />
          <path d="M484 58q-10-14-34-14-34 2-34 26 0 14 20 26 14 10 12 28h46q0-34-18-46-18-10-10-16 8-4 18-4z" fill="#fbe9e7" />
        </svg>
        <div className="relative flex h-[108px] items-center pl-[24px]">
          <svg width="48" height="48" viewBox="0 0 48 48"><circle cx="24" cy="24" r="24" fill="url(#bd)" /><text x="23" y="35" fontSize="30" fontWeight="900" fontStyle="italic" fill="#fff" textAnchor="middle" textLength="31" lengthAdjust="spacingAndGlyphs">VS</text></svg>
          <span className="ml-[12px] whitespace-nowrap pt-[3px] text-[42px] font-medium leading-none text-[#333]">多空看盘</span>
        </div>
        <div className="relative -mt-[4px] ml-[27px] flex h-[30px] w-[445px] gap-[4px] overflow-hidden rounded-t-[10px]">
          <span className="w-[309px] -skew-x-12 bg-[#ff6457] shadow-[-10px_0_0_#ff6457]" /><span className="flex-1 -skew-x-12 bg-[#3dbb60] shadow-[10px_0_0_#3dbb60]" />
        </div>
      </div>
    </div>
  );
}

function BottomBar() {
  const items: [string, React.ReactNode][] = [
    ["交易", <g key="1"><path d="M16 8.500A28 28 0 0 1 50 52M47 56A28 28 0 0 1 12 16M1 19l8-4v8M63 41l-6 8 0-9M22 17l9 12 9-12M21 31h21M21 41h21M31.500 29v22" /></g>],
    ["发帖", <g key="2"><path d="M45 4.500H12q-7 0-7 7v40q0 7 7 7h40q7 0 7-7V22" /><path d="M56 4l4 5-4 5-4-5zM49 11l5 4-22 25-8 5 3-9z" fill="#666" stroke="none" /></g>],
    ["功能", <g key="3"><rect x="7" y="6" width="22" height="22" rx="3" /><path d="M46.500 5l12 12.500-12 12.500-12-12.500z" /><rect x="7" y="35" width="22" height="22" rx="3" /><rect x="35" y="35" width="22" height="22" rx="3" /></g>],
    ["设自选", <g key="4"><circle cx="32" cy="32" r="27" /><g fill="#666" stroke="none"><circle cx="20" cy="32" r="3" /><circle cx="32" cy="32" r="3" /><circle cx="44" cy="32" r="3" /></g></g>],
  ];
  return (
    <div className="flex h-[136px] shrink-0 border-t-2 border-[#cfd2d6] bg-[#f7f8fa]">
      <div className="flex w-[275px] flex-col items-center">
        <svg width="22" height="8" viewBox="0 0 22 8" className="mt-[8px] shrink-0"><path d="M0 8L11 0l11 8z" fill="#777" /></svg>
        <span className="mt-[16px] text-[35.500px] leading-none text-[#0c9a0c]">30406.78</span>
        <div className="mt-[16px] flex items-center gap-[15px] whitespace-nowrap text-[30px] leading-none text-[#666]"><span className="pt-px">互联网服务</span><span className="text-[32px] text-[#0c9a0c]">-0.74%</span></div>
      </div>
      {items.map(([t, p]) => (
        <div key={t} className="flex w-[201px] flex-col items-center pt-[7px]">
          <svg width="64" height="64" viewBox="0 0 64 64" fill="none" stroke="#666" strokeWidth="3">{p}</svg>
          <span className="mt-[19px] whitespace-nowrap text-[31px] leading-none text-[#666]">{t}</span>
        </div>
      ))}
    </div>
  );
}

function NavBar() {
  return (
    <div className="flex h-[132px] shrink-0 items-center gap-[228px] pl-[250px]">
      {[
        <path key="a" d="M2 4h36M2 20h36M2 36h36" />,
        <rect key="b" x="3" y="3" width="34" height="34" rx="8" />,
        <path key="c" d="M32 3.500q2-1 2 1.500v30q0 2.500-2 1.500L2 22q-2.500-2 0-4z" />,
      ].map((p, i) => <svg key={i} width="40" height="40" viewBox="0 0 40 40" fill="none" stroke="#9a9a9a" strokeWidth="2.800">{p}</svg>)}
    </div>
  );
}

export default function App() {
  return (
    <div className="flex h-[2412px] w-[1080px] flex-col overflow-hidden bg-[#fefefe] font-[Roboto,'Noto_Sans_CJK_SC',sans-serif]">
      <StatusBar />
      <Header />
      <Quote />
      <Notice />
      <PeriodTabs />
      <IndicatorBar />
      <Charts />
      <Banner />
      <SectionTabs />
      <Cards />
      <BottomBar />
      <NavBar />
    </div>
  );
}
